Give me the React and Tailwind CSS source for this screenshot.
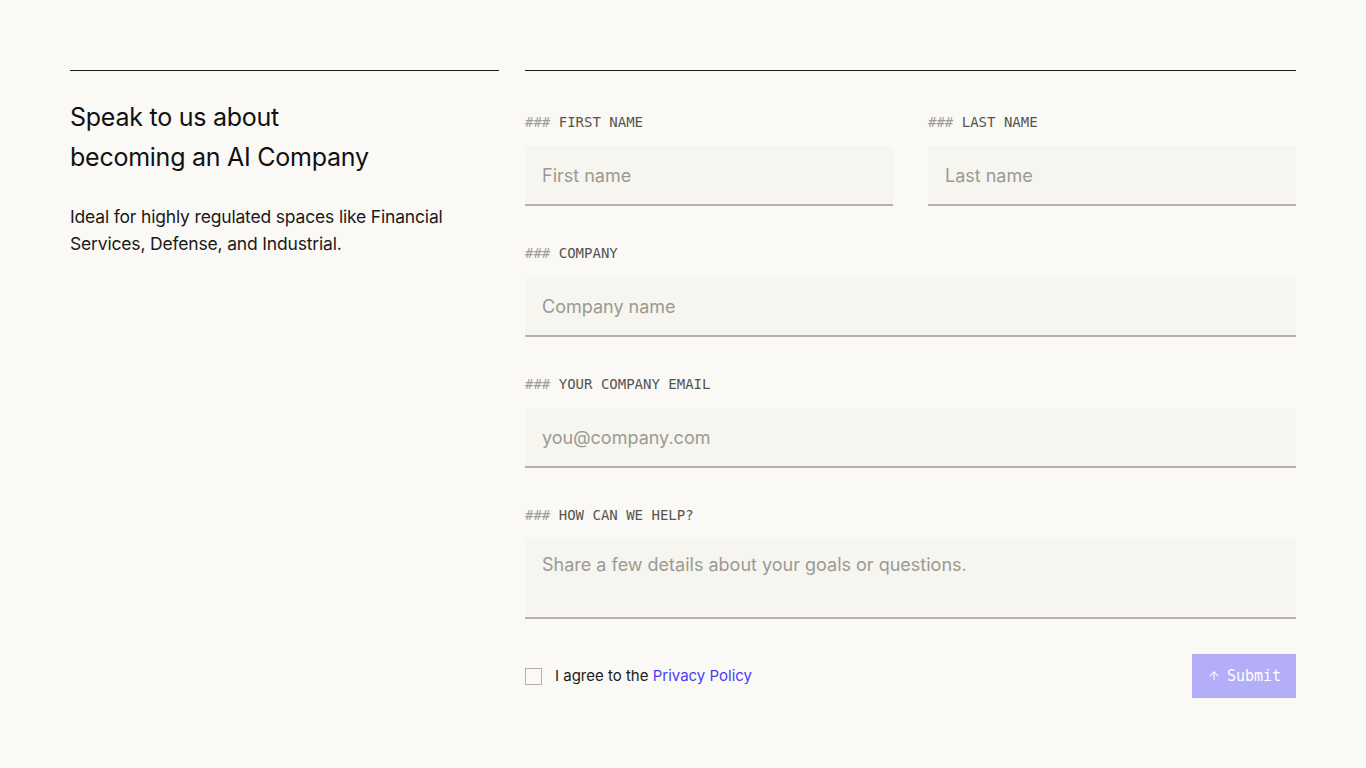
import React from "react";
import { ArrowUp } from "lucide-react";

const mono = { fontFamily: '"DejaVu Sans Mono", "Liberation Mono", monospace' };

function Label({ children }) {
  return (
    <div className="text-[14px] leading-[20px] mb-[14px]" style={mono}>
      <span className="text-[#a09e96]">###</span>{" "}
      <span className="text-[#55544f]">{children}</span>
    </div>
  );
}

function Field({ label, placeholder }) {
  return (
    <div className="flex flex-col">
      <Label>{label}</Label>
      <input
        placeholder={placeholder}
        className="h-[60px] w-full bg-[#f6f5ef] border-b-2 border-[#b6b4aa] px-[17px] text-[18px] text-[#1a1a1a] placeholder:text-[#9b9a94] outline-none"
      />
    </div>
  );
}

export default function App() {
  return (
    <div
      className="min-h-[768px] w-full bg-[#faf9f6] px-[70px] pt-[70px]"
      style={{ fontFamily: 'Inter, "Noto Sans", sans-serif' }}
    >
      <div className="flex gap-[26px]">
        <div className="w-[429px] border-t border-[#1a1a1a] pt-[26px]">
          <h2 className="text-[25px] leading-[40px] text-[#111] tracking-[-0.01em]">
            Speak to us about
            <br />
            becoming an AI Company
          </h2>
          <p className="mt-[26px] text-[17.5px] leading-[27px] tracking-[-0.01em] text-[#1a1a1a] pr-[30px]">
            Ideal for highly regulated spaces like Financial Services, Defense, and Industrial.
          </p>
        </div>
        <form className="flex-1 border-t border-[#1a1a1a] pt-[41px] flex flex-col gap-[37px]">
          <div className="grid grid-cols-2 gap-[35px]">
            <Field label="FIRST NAME" placeholder="First name" />
            <Field label="LAST NAME" placeholder="Last name" />
          </div>
          <Field label="COMPANY" placeholder="Company name" />
          <Field label="YOUR COMPANY EMAIL" placeholder="you@company.com" />
          <div className="flex flex-col">
            <Label>HOW CAN WE HELP?</Label>
            <textarea
              placeholder="Share a few details about your goals or questions."
              className="h-[80px] w-full resize-none bg-[#f6f5ef] border-b-2 border-[#b6b4aa] px-[17px] pt-[14px] text-[18px] leading-[24px] text-[#1a1a1a] placeholder:text-[#9b9a94] outline-none"
            />
          </div>
          <div className="flex items-center justify-between -mt-[2px]">
            <label className="flex items-center gap-[13px] text-[15px] text-[#1a1a1a]">
              <span className="w-[17px] h-[17px] border border-[#b3b1aa] bg-[#faf9f6]" />
              <span>
                I agree to the <span className="text-[#4b3ff0]">Privacy Policy</span>
              </span>
            </label>
            <button
              type="button"
              className="w-[104px] h-[44px] bg-[#b4aef8] text-white text-[15px] flex items-center justify-center gap-[6px]"
              style={mono}
            >
              <ArrowUp size={14} strokeWidth={1.8} />
              <span>Submit</span>
            </button>
          </div>
        </form>
      </div>
    </div>
  );
}
